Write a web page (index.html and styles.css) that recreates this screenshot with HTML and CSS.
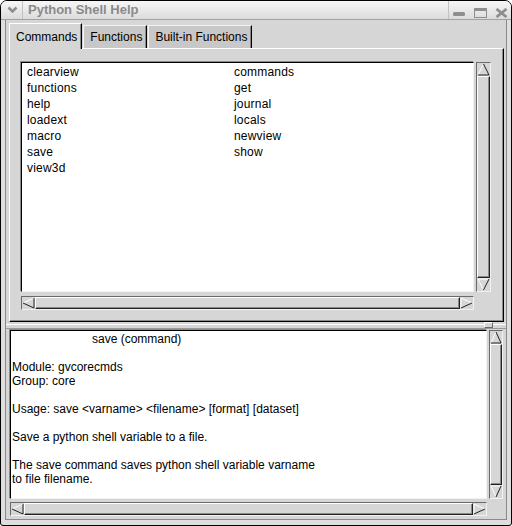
FILE: index.html
```html
<!DOCTYPE html>
<html>
<head>
<meta charset="utf-8">
<title>Python Shell Help</title>
<link rel="stylesheet" href="styles.css">
</head>
<body>
<div class="window">
  <div class="titlebar">
    <div class="menu-btn">
      <svg width="11" height="8" viewBox="0 0 11 8"><path d="M1.5 1.5 L5.5 5.5 L9.5 1.5" fill="none" stroke="#8e8e8e" stroke-width="2.6"/></svg>
    </div>
    <div class="title">Python Shell Help</div>
    <div class="controls">
      <svg class="c-min" width="12" height="4" viewBox="0 0 12 4"><rect x="0" y="0" width="12" height="4" rx="1.5" fill="#8e8e8e"/></svg>
      <svg class="c-max" width="13" height="10" viewBox="0 0 13 10"><rect x="0.5" y="0.5" width="12" height="9" fill="none" stroke="#8e8e8e"/><rect x="0" y="0" width="13" height="3" fill="#8e8e8e"/></svg>
      <svg class="c-close" width="13" height="10" viewBox="0 0 13 10"><path d="M1.5 1 L11.5 9 M11.5 1 L1.5 9" stroke="#8e8e8e" stroke-width="2.8"/></svg>
    </div>
  </div>
  <div class="client">
    <div class="notebook">
      <div class="tabs">
        <div class="tab active">Commands</div>
        <div class="tab">Functions</div>
        <div class="tab">Built-in Functions</div>
      </div>
      <div class="panel">
        <div class="scrollrow">
          <div class="listbox">
            <div class="item">clearview</div><div class="item">commands</div>
            <div class="item">functions</div><div class="item">get</div>
            <div class="item">help</div><div class="item">journal</div>
            <div class="item">loadext</div><div class="item">locals</div>
            <div class="item">macro</div><div class="item">newview</div>
            <div class="item">save</div><div class="item">show</div>
            <div class="item">view3d</div>
          </div>
          <div class="vscroll list-v">
            <div class="btn"><svg width="13" height="13" viewBox="0 0 13 13"><polygon points="6.5,1 1,12 12,12" fill="#d6d6d6"/><path d="M6.5 1 L1 12" stroke="#fff"/><path d="M6.5 1 L12 12 H1" stroke="#222" fill="none"/></svg></div>
            <div class="slider"></div>
            <div class="btn"><svg width="13" height="13" viewBox="0 0 13 13"><polygon points="1,1 12,1 6.5,12" fill="#d6d6d6"/><path d="M1 1 H12 M1 1 L6.5 12" stroke="#fff" fill="none"/><path d="M12 1 L6.5 12" stroke="#222"/></svg></div>
          </div>
        </div>
        <div class="hscroll list-h">
          <div class="btn"><svg width="13" height="12" viewBox="0 0 13 12"><polygon points="1,6 12,1 12,11" fill="#d6d6d6"/><path d="M1 6 L12 1" stroke="#fff"/><path d="M12 1 V11 L1 6" stroke="#222" fill="none"/></svg></div>
          <div class="slider"></div>
          <div class="btn"><svg width="13" height="12" viewBox="0 0 13 12"><polygon points="1,1 12,6 1,11" fill="#d6d6d6"/><path d="M1 11 V1 L12 6" stroke="#fff" fill="none"/><path d="M12 6 L1 11" stroke="#222"/></svg></div>
        </div>
      </div>
    </div>
    <div class="sash"><span class="grip"></span></div>
    <div class="textpane">
      <div class="scrollrow">
        <div class="textbox">
          <div class="line heading">save (command)</div>
          <div class="line">&nbsp;</div>
          <div class="line">Module: gvcorecmds</div>
          <div class="line">Group: core</div>
          <div class="line">&nbsp;</div>
          <div class="line">Usage: save &lt;varname&gt; &lt;filename&gt; [format] [dataset]</div>
          <div class="line">&nbsp;</div>
          <div class="line">Save a python shell variable to a file.</div>
          <div class="line">&nbsp;</div>
          <div class="line">The save command saves python shell variable varname</div>
          <div class="line">to file filename.</div>
        </div>
        <div class="vscroll text-v">
          <div class="btn"><svg width="12" height="13" viewBox="0 0 12 13"><polygon points="6,1 1,12 11,12" fill="#d6d6d6"/><path d="M6 1 L1 12" stroke="#fff"/><path d="M6 1 L11 12 H1" stroke="#222" fill="none"/></svg></div>
          <div class="slider"></div>
          <div class="btn"><svg width="12" height="13" viewBox="0 0 12 13"><polygon points="1,1 11,1 6,12" fill="#d6d6d6"/><path d="M1 1 H11 M1 1 L6 12" stroke="#fff" fill="none"/><path d="M11 1 L6 12" stroke="#222"/></svg></div>
        </div>
      </div>
      <div class="hscroll text-h">
        <div class="btn"><svg width="13" height="12" viewBox="0 0 13 12"><polygon points="1,6 12,1 12,11" fill="#d6d6d6"/><path d="M1 6 L12 1" stroke="#fff"/><path d="M12 1 V11 L1 6" stroke="#222" fill="none"/></svg></div>
        <div class="slider"></div>
        <div class="btn"><svg width="13" height="12" viewBox="0 0 13 12"><polygon points="1,1 12,6 1,11" fill="#d6d6d6"/><path d="M1 11 V1 L12 6" stroke="#fff" fill="none"/><path d="M12 6 L1 11" stroke="#222"/></svg></div>
      </div>
    </div>
  </div>
</div>
</body>
</html>
```

FILE: styles.css
```css
* { box-sizing: border-box; }
html, body { margin: 0; padding: 0; background: #ffffff; }
body {
  font-family: "Liberation Sans", Arial, sans-serif;
  font-size: 12px;
  color: #000;
}

.window {
  width: 512px;
  height: 526px;
  border: 1px solid #000;
  border-radius: 7px 7px 3px 3px;
  background: #dedede;
  display: flex;
  flex-direction: column;
  overflow: hidden;
}

/* ---------- title bar ---------- */
.titlebar {
  height: 19px;
  flex: none;
  display: flex;
  align-items: stretch;
  background: linear-gradient(#f7f7f7, #dcdcdc);
  border-bottom: 1px solid #a2a2a2;
}
.menu-btn {
  width: 22px;
  display: flex;
  align-items: center;
  justify-content: center;
  padding: 0 2px 1px 3px;
  border-right: 1px solid #c2c2c2;
}
.title {
  padding-left: 5px;
  font-size: 13px;
  font-weight: bold;
  color: #8a8a8a;
  line-height: 18px;
}
.controls {
  margin-left: auto;
  width: 63px;
  border-left: 1px solid #c2c2c2;
  display: flex;
  align-items: flex-start;
  padding: 6px 0 0 4px;
}
.c-min { margin-top: 5px; }
.c-max { margin-left: 9px; margin-top: 1px; }
.c-close { margin-left: 8px; margin-top: 1px; }

/* ---------- client ---------- */
.client {
  flex: 1;
  margin: 0 4px 5px;
  border: 1px solid #8a8a8a;
  border-top: none;
  background: #d6d6d6;
  display: flex;
  flex-direction: column;
}

.notebook {
  padding: 3px 2px 0 3px;
  display: flex;
  flex-direction: column;
}
.tabs {
  display: flex;
  align-items: flex-end;
  height: 25px;
}
.tab {
  height: 23px;
  line-height: 22px;
  padding: 0 4px 0 6px;
  background: #c8c8c8;
  border-top: 1px solid #f4f4f4;
  border-left: 1px solid #f4f4f4;
  border-right: 1px solid #000;
  box-shadow: inset -1px 0 0 #8a8a8a;
  margin-right: 1px;
}
.tab.active {
  height: 26px;
  line-height: 24px;
  padding-top: 1px;
  background: #d6d6d6;
  border-top-color: #fff;
  border-left-color: #fff;
  margin-bottom: -1px;
  position: relative;
  z-index: 1;
}

.panel {
  height: 274px;
  border-top: 1px solid #fff;
  border-left: 1px solid #fff;
  border-right: 1px solid #000;
  border-bottom: 1px solid #000;
  box-shadow: inset -1px -1px 0 #8a8a8a;
  padding: 13px 12px 11px 11px;
  display: flex;
  flex-direction: column;
  gap: 4px;
}

.scrollrow {
  display: flex;
  flex: 1;
  min-height: 0;
  gap: 2px;
}

.listbox {
  width: 453px;
  background: #fff;
  border-top: 1px solid #000;
  border-left: 1px solid #000;
  border-right: 1px solid #f2f2f2;
  border-bottom: 1px solid #f2f2f2;
  box-shadow: -1px -1px 0 #8a8a8a;
  padding: 1px 0 0 5px;
  display: grid;
  grid-template-columns: 207px 1fr;
  grid-auto-rows: 16px;
  align-content: start;
  line-height: 16px;
  letter-spacing: 0.2px;
}

/* ---------- scrollbars ---------- */
.vscroll, .hscroll {
  display: flex;
  background: #c4c4c4;
  border-top: 1px solid #6a6a6a;
  border-left: 1px solid #6a6a6a;
  border-right: 1px solid #f2f2f2;
  border-bottom: 1px solid #f2f2f2;
}
.vscroll { flex-direction: column; }
.list-v { width: 15px; }
.text-v { width: 14px; }
.hscroll { height: 14px; flex: none; }
.list-h { width: 453px; }
.text-h { width: 477px; }

.btn {
  display: flex;
  flex: none;
  background: #d6d6d6;
}
.btn svg { display: block; }
.slider {
  flex: 1;
  background: #d6d6d6;
  border-top: 1px solid #fff;
  border-left: 1px solid #fff;
  border-right: 1px solid #222;
  border-bottom: 1px solid #222;
  box-shadow: inset -1px -1px 0 #8a8a8a;
}

/* ---------- sash ---------- */
.sash {
  height: 8px;
  flex: none;
  position: relative;
}
.sash::before {
  content: "";
  position: absolute;
  left: 0;
  right: 0;
  top: 2px;
  height: 3px;
  border-top: 1px solid #fff;
  border-bottom: 1px solid #9a9a9a;
}
.grip {
  position: absolute;
  right: 13px;
  top: 0;
  width: 9px;
  height: 6px;
  background: #d6d6d6;
  border-top: 1px solid #fff;
  border-left: 1px solid #fff;
  border-right: 1px solid #6a6a6a;
  border-bottom: 1px solid #6a6a6a;
}

/* ---------- text pane ---------- */
.textpane {
  flex: 1;
  padding: 0 3px 3px 4px;
  display: flex;
  flex-direction: column;
  gap: 3px;
}
.textbox {
  width: 478px;
  background: #fff;
  border-top: 1px solid #000;
  border-left: 1px solid #000;
  border-right: 1px solid #f2f2f2;
  border-bottom: 1px solid #f2f2f2;
  box-shadow: -1px -1px 0 #8a8a8a;
  padding: 1px 0 0 1px;
  line-height: 14px;
  white-space: nowrap;
  overflow: hidden;
}
.heading { padding-left: 80px; }
```
